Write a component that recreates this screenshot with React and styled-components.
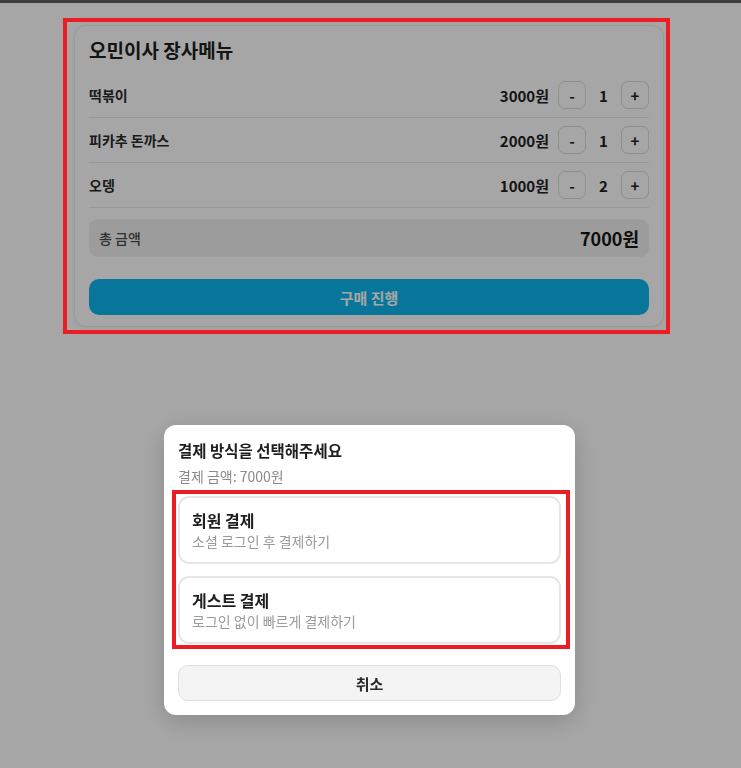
import React, { useState } from "react";
import styled, { createGlobalStyle } from "styled-components";

const Global = createGlobalStyle`
  html, body { margin: 0; padding: 0; background: #ffffff; }
  body {
    font-family: "Noto Sans CJK KR", "Noto Sans", sans-serif;
    color: #222;
    width: 741px;
    min-height: 768px;
  }
  * { box-sizing: border-box; }
  button { font-family: inherit; }
`;

const TopBar = styled.div`
  height: 3px;
  background: #626262;
`;

const Page = styled.div`
  position: relative;
  min-height: 768px;
`;

const Main = styled.main`
  padding-right: 3px;
`;

const Card = styled.section`
  width: 590px;
  margin: 22px auto 0;
  background: #fff;
  border: 1px solid #ececec;
  border-radius: 12px;
  box-shadow: 0 1px 4px rgba(0, 0, 0, 0.06);
  padding: 10px 14px 11px;
  display: flex;
  flex-direction: column;
`;

const Title = styled.h1`
  margin: 0 0 9px;
  font-size: 19px;
  line-height: 28px;
  font-weight: 700;
  color: #1e1e1e;
`;

const Row = styled.div`
  height: 45px;
  display: flex;
  align-items: center;
  justify-content: space-between;
  border-bottom: 1px solid #e8e8e8;
`;

const ItemName = styled.span`
  font-size: 14px;
  font-weight: 600;
  color: #2a2a2a;
`;

const Controls = styled.div`
  display: flex;
  align-items: center;
`;

const Price = styled.span`
  font-size: 15px;
  font-weight: 700;
  color: #222;
  margin-right: 9px;
`;

const QtyButton = styled.button`
  width: 28px;
  height: 28px;
  border: 1px solid #dcdcdc;
  border-radius: 7px;
  background: #fff;
  font-size: 15px;
  font-weight: 700;
  color: #222;
  padding: 0;
  display: flex;
  align-items: center;
  justify-content: center;
  cursor: pointer;
`;

const Qty = styled.span`
  width: 35px;
  text-align: center;
  font-size: 15px;
  font-weight: 700;
  color: #222;
`;

const TotalBox = styled.div`
  margin-top: 11px;
  height: 38px;
  border-radius: 9px;
  background: #f0f0f0;
  display: flex;
  align-items: center;
  justify-content: space-between;
  padding: 0 10px;
`;

const TotalLabel = styled.span`
  font-size: 14px;
  font-weight: 500;
  color: #4a4a4a;
`;

const TotalValue = styled.span`
  font-size: 18px;
  font-weight: 700;
  color: #151515;
`;

const PrimaryButton = styled.button`
  margin-top: 22px;
  height: 36px;
  border: none;
  border-radius: 10px;
  background: #0cb5ed;
  color: #ffffff;
  font-size: 15px;
  font-weight: 700;
  cursor: pointer;
`;

const Overlay = styled.div`
  position: fixed;
  inset: 0;
  background: rgba(0, 0, 0, 0.35);
  z-index: 10;
  display: flex;
  justify-content: center;
  align-items: flex-end;
  padding: 0 2px 53px 0;
`;

const Modal = styled.div`
  width: 411px;
  background: #fff;
  border-radius: 12px;
  box-shadow: 0 6px 24px rgba(0, 0, 0, 0.18);
  padding: 14px;
  display: flex;
  flex-direction: column;
`;

const ModalTitle = styled.h2`
  margin: 0;
  font-size: 15.5px;
  line-height: 22px;
  font-weight: 700;
  color: #1e1e1e;
`;

const ModalSub = styled.p`
  margin: 5px 0 0;
  font-size: 14px;
  line-height: 20px;
  color: #8a8a8a;
`;

const Options = styled.div`
  margin-top: 10px;
  display: flex;
  flex-direction: column;
  gap: 12px;
`;

const Option = styled.button`
  text-align: left;
  background: #fff;
  border: 2px solid #e6e6e6;
  border-radius: 11px;
  padding: 11px 12px;
  display: flex;
  flex-direction: column;
  cursor: pointer;
`;

const OptionTitle = styled.span`
  font-size: 16px;
  line-height: 22px;
  font-weight: 700;
  color: #1e1e1e;
`;

const OptionDesc = styled.span`
  font-size: 14px;
  line-height: 20px;
  color: #9a9a9a;
`;

const CancelButton = styled.button`
  margin-top: 21px;
  height: 36px;
  border: 1px solid #e0e0e0;
  border-radius: 10px;
  background: #f4f4f4;
  font-size: 15px;
  font-weight: 700;
  color: #2a2a2a;
  cursor: pointer;
`;

const Annotation = styled.div`
  position: absolute;
  left: ${(p) => p.$left}px;
  top: ${(p) => p.$top}px;
  width: ${(p) => p.$width}px;
  height: ${(p) => p.$height}px;
  border: 4px solid #ec1c24;
  z-index: 20;
  pointer-events: none;
`;

const initialItems = [
  { id: 1, name: "떡볶이", price: 3000, qty: 1 },
  { id: 2, name: "피카추 돈까스", price: 2000, qty: 1 },
  { id: 3, name: "오뎅", price: 1000, qty: 2 },
];

export default function App() {
  const [items, setItems] = useState(initialItems);
  const total = items.reduce((s, i) => s + i.price * i.qty, 0);

  const change = (id, d) =>
    setItems((list) =>
      list.map((i) => (i.id === id ? { ...i, qty: Math.max(0, i.qty + d) } : i))
    );

  return (
    <Page>
      <Global />
      <TopBar />
      <Main>
        <Card>
          <Title>오민이사 장사메뉴</Title>
          {items.map((item) => (
            <Row key={item.id}>
              <ItemName>{item.name}</ItemName>
              <Controls>
                <Price>{item.price}원</Price>
                <QtyButton onClick={() => change(item.id, -1)}>-</QtyButton>
                <Qty>{item.qty}</Qty>
                <QtyButton onClick={() => change(item.id, 1)}>+</QtyButton>
              </Controls>
            </Row>
          ))}
          <TotalBox>
            <TotalLabel>총 금액</TotalLabel>
            <TotalValue>{total}원</TotalValue>
          </TotalBox>
          <PrimaryButton>구매 진행</PrimaryButton>
        </Card>
      </Main>

      <Overlay>
        <Modal>
          <ModalTitle>결제 방식을 선택해주세요</ModalTitle>
          <ModalSub>결제 금액: {total}원</ModalSub>
          <Options>
            <Option>
              <OptionTitle>회원 결제</OptionTitle>
              <OptionDesc>소셜 로그인 후 결제하기</OptionDesc>
            </Option>
            <Option>
              <OptionTitle>게스트 결제</OptionTitle>
              <OptionDesc>로그인 없이 빠르게 결제하기</OptionDesc>
            </Option>
          </Options>
          <CancelButton>취소</CancelButton>
        </Modal>
      </Overlay>

      <Annotation $left={63} $top={18} $width={607} $height={316} />
      <Annotation $left={172} $top={490} $width={398} $height={159} />
    </Page>
  );
}
